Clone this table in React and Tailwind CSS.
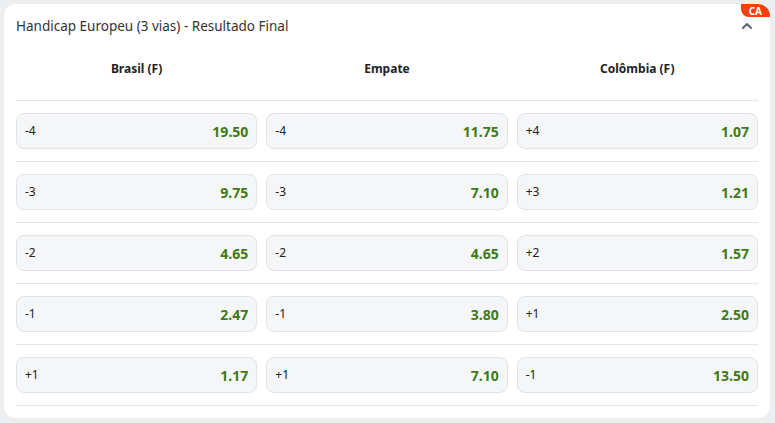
import React from "react";

const rows = [
  [["-4", "19.50"], ["-4", "11.75"], ["+4", "1.07"]],
  [["-3", "9.75"], ["-3", "7.10"], ["+3", "1.21"]],
  [["-2", "4.65"], ["-2", "4.65"], ["+2", "1.57"]],
  [["-1", "2.47"], ["-1", "3.80"], ["+1", "2.50"]],
  [["+1", "1.17"], ["+1", "7.10"], ["-1", "13.50"]],
];

const headers = ["Brasil (F)", "Empate", "Colômbia (F)"];

const Cell = ({ label, odd }) => (
  <div className="h-[36px] flex items-center justify-between rounded-lg border border-[#e1e3e6] bg-[#f5f6f8] pl-[8px] pr-[8px] cursor-pointer">
    <span className="text-[12px] text-[#222]">{label}</span>
    <span className="text-[14px] font-bold text-[#3f7a1a]">{odd}</span>
  </div>
);

const App = () => {
  return (
    <div
      className="w-[775px] h-[423px] bg-[#eceef0] p-[4px] pr-[5px]"
      style={{ fontFamily: '"Noto Sans", "Open Sans", sans-serif' }}
    >
      <div className="relative h-[414px] bg-white rounded-xl px-[12px]">
        <div className="absolute right-0 top-0 h-[13px] px-[8px] bg-[#f4400c] rounded-bl-lg rounded-tr-xl flex items-center">
          <span className="text-[10px] font-bold text-white leading-none">CA</span>
        </div>

        <div className="h-[44px] flex items-center justify-between">
          <h2 className="text-[13.5px] text-[#333]">Handicap Europeu (3 vias) - Resultado Final</h2>
          <svg width="12" height="12" viewBox="0 0 12 12" className="mr-[5px]">
            <path d="M2 8 L6 4 L10 8" fill="none" stroke="#5b6570" strokeWidth="2" strokeLinecap="round" strokeLinejoin="round" />
          </svg>
        </div>

        <div className="grid grid-cols-3 gap-[9px] h-[53px] items-start pt-[12px] border-b border-[#e3e5e8]">
          {headers.map((h) => (
            <div key={h} className="text-center text-[12px] font-bold text-[#222]">
              {h}
            </div>
          ))}
        </div>

        {rows.map((r, i) => (
          <div key={i} className="grid grid-cols-3 gap-[9px] py-[12px] border-b border-[#e3e5e8]">
            {r.map(([l, o], j) => (
              <Cell key={j} label={l} odd={o} />
            ))}
          </div>
        ))}
      </div>
    </div>
  );
};

export default App;
